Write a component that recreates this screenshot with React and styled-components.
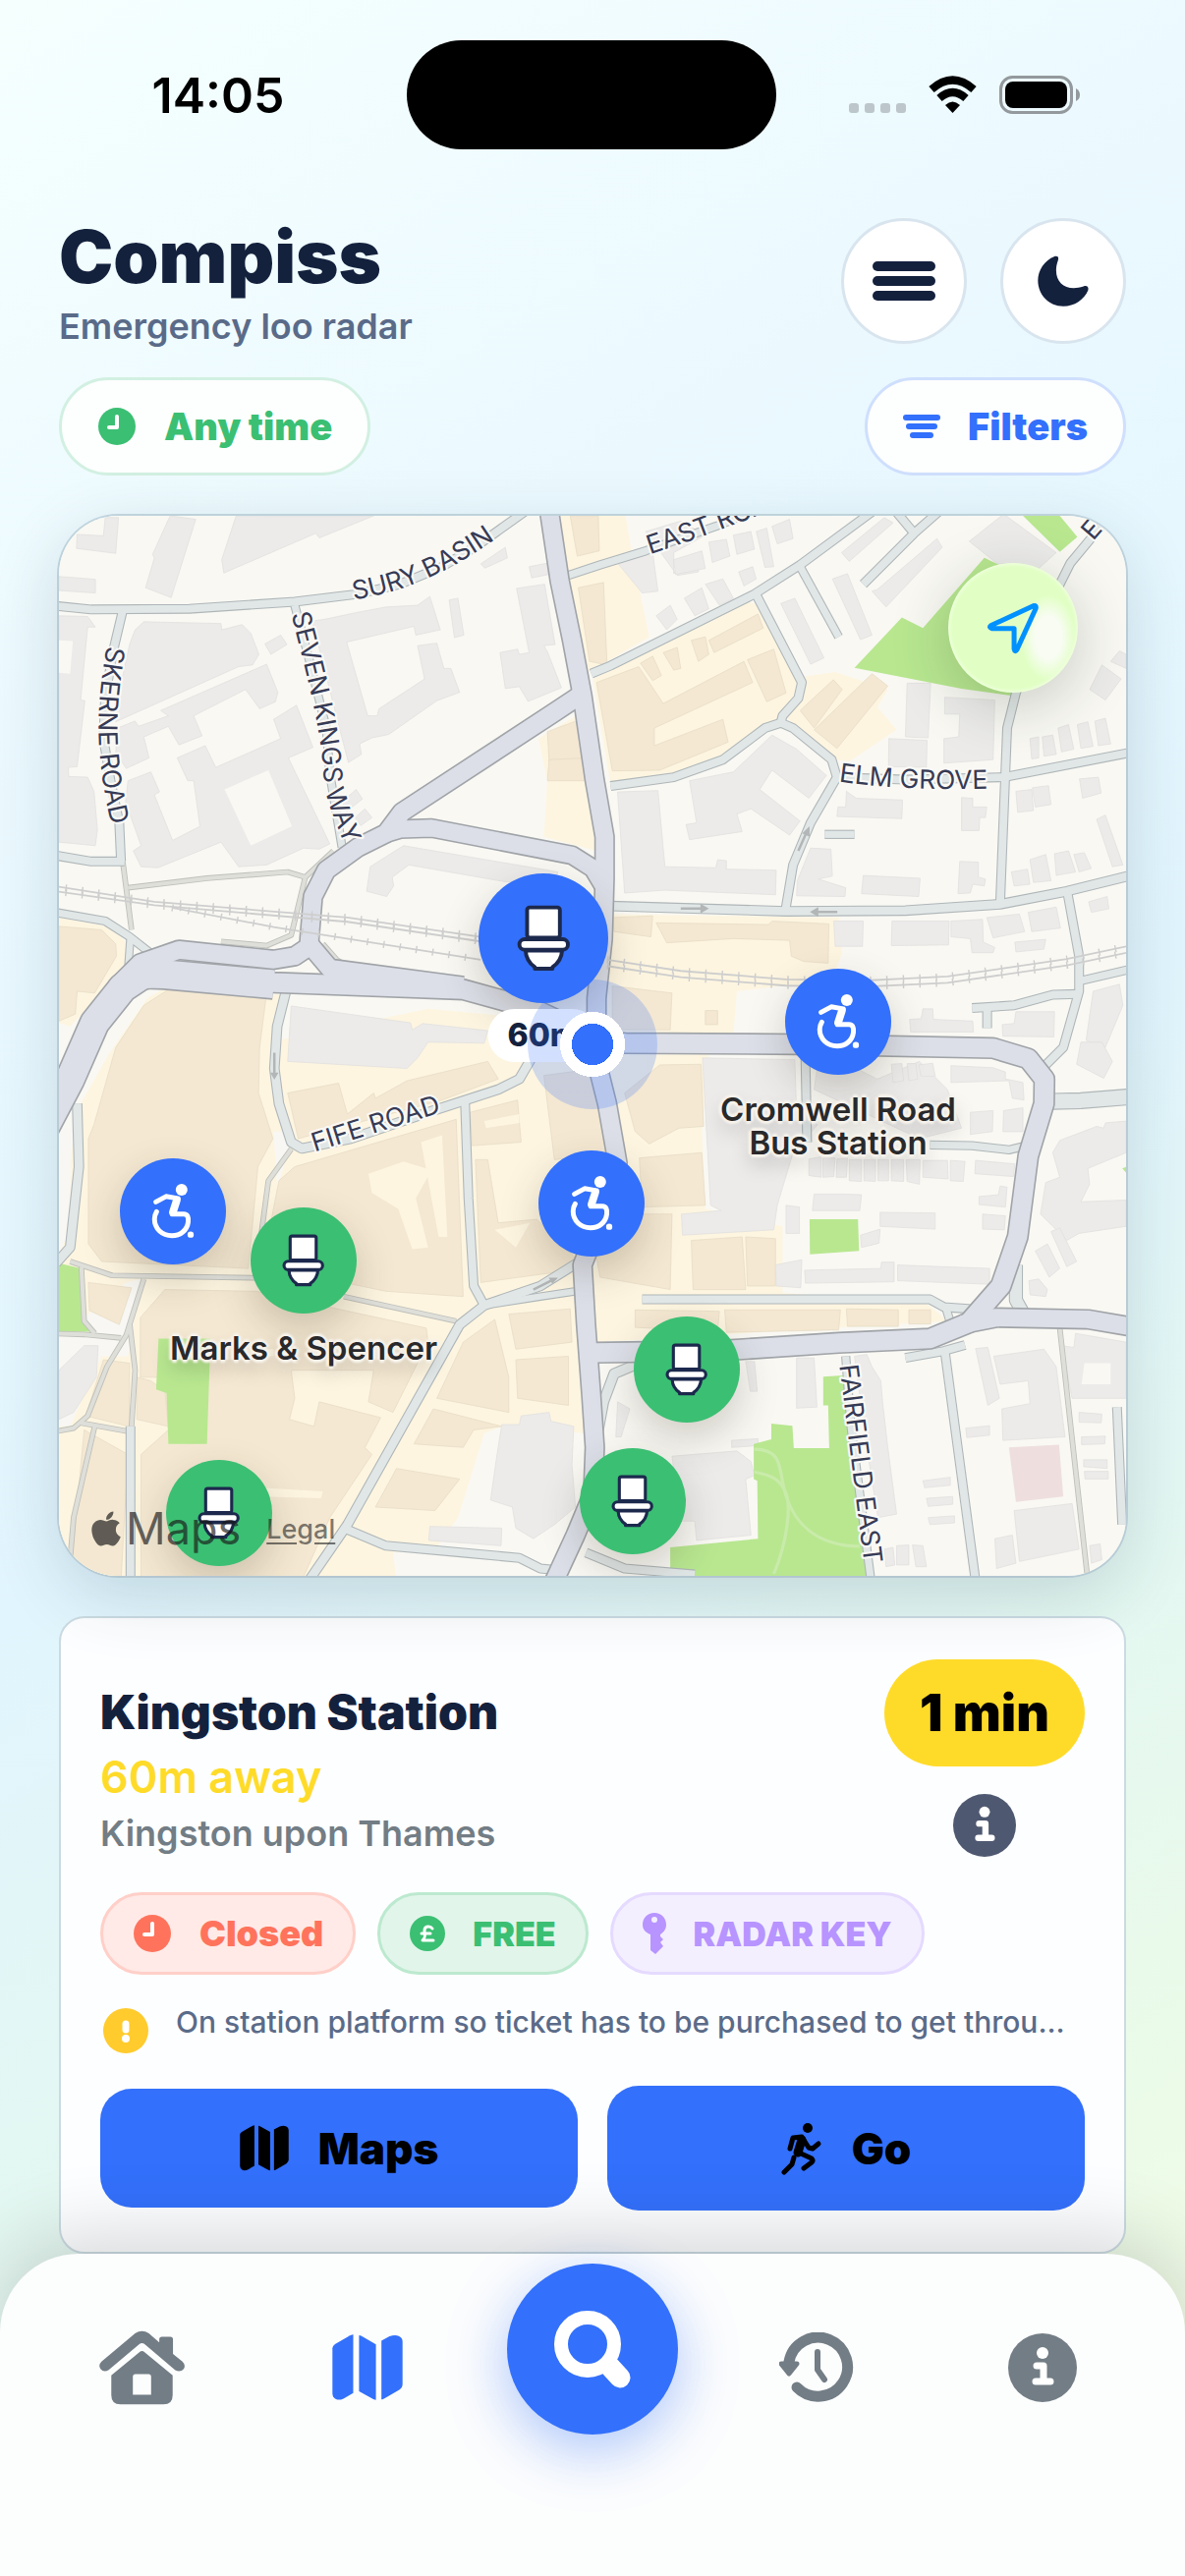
import React from 'react';
import styled, { createGlobalStyle } from 'styled-components';
import { FaApple } from 'react-icons/fa';

const NAVY = '#14213d';
const BLUE = '#3370fb';
const GREEN = '#3bbf73';
const CORAL = '#ff735c';
const LILAC = '#b794ff';
const GREY = '#727d85';

/* ---------- map data (drawn on a 3041 x 3021 grid) ---------- */

const majorRoads = [
    ['1425,30 1455,230 1490,400 1520,560 1555,800 1583,960 1583,1080 1578,1250 1560,1420 1560,1600 1590,1720 1620,1890 1560,2080 1520,2180 1530,2350 1545,2550 1555,2700 1550,2830 1500,2950 1440,3080', 50],
    ['1515,555 1440,605 1005,890 960,950 880,990 790,1055 752,1130 742,1250 740,1290', 50],
    ['960,950 1000,938 1090,935 1490,1012 1550,1050 1580,1100', 48],
    ['190,1390 260,1320 370,1282 640,1310 700,1300 745,1270 800,1335 1180,1385', 50],
    ['-40,1840 60,1650 130,1490 210,1390 270,1350 330,1352 640,1380', 80],
    ['250,1372 330,1350 640,1375 1180,1395 1380,1450 1560,1535 1640,1548 2140,1551 2690,1562 2790,1592 2836,1650 2835,1720 2790,1870 2760,2100 2712,2240 2620,2345 2510,2390 2250,2402 1900,2425 1555,2430', 54],
    ['2600,2350 2700,2330 2960,2335 3090,2357', 50],
];

const minorRoads = [
    ['0,300 120,312 400,310 700,290 880,268 1000,240 1120,190 1220,130 1360,30', 22],
    ['210,315 185,420 160,560 155,680 175,800 200,920 205,1030', 22],
    ['0,1010 120,1030 215,1030', 22],
    ['700,300 740,450 790,650 800,780 835,990', 20],
    ['0,1172 160,1200 230,1245 300,1300', 20],
    ['232,1245 225,1340', 18],
    ['675,1400 650,1500 642,1620 655,1720 690,1830 720,1848 860,1820 1110,1735 1280,1680 1340,1650 1375,1590', 24],
    ['1185,1710 1195,1990 1210,2240 1240,2295', 22],
    ['740,3080 850,2920 1170,2350 1240,2295 1400,2240 1520,2165', 24],
    ['1240,2295 1400,2270 1520,2252', 18],
    ['80,1720 85,1900 60,2130 20,2175', 24],
    ['232,2640 232,3080', 22],
    ['840,2930 960,2980 1180,3000 1340,3015 1400,3045 1450,3050', 22],
    ['1480,215 1570,185 1700,145 1900,75 2040,20', 20],
    ['1545,495 1600,472 2010,268 2140,185 2350,30', 22],
    ['2015,270 2145,520 2135,565 2090,615 2085,635', 22],
    ['1600,815 1780,790 1920,740 2040,650 2085,635 2120,650 2230,740 2245,790 2170,920 2120,1040 2098,1170', 22],
    ['2140,190 2250,390', 20],
    ['2320,240 2465,95 2550,20', 22],
    ['2465,95 2415,35', 22],
    ['2240,790 2440,797 2720,790 3090,718', 22],
    ['3010,60 2910,180 2840,320 2755,550 2730,650 2720,900 2710,1150', 22],
    ['1600,1157 2100,1172 2440,1170 2710,1152 2900,1115 3090,1068', 24],
    ['2902,1120 2935,1300 2935,1400 2890,1560 2830,1620', 22],
    ['2940,1370 3090,1335', 20],
    ['2930,1408 2860,1410 2750,1440 2630,1448', 22],
    ['2673,1448 2673,1505', 22],
    ['2860,1714 2940,1712 3090,1700', 42],
    ['2155,1580 2160,1830', 22],
    ['2510,1838 2630,1840 2735,1852 2785,1840', 20],
    ['1690,2278 2510,2278 2550,2300 2620,2305 2660,2325', 22],
    ['2555,2300 2570,2350', 20],
    ['2755,2180 2755,2280 2780,2325', 34],
    ['2440,2445 2550,2425 2610,2408', 22],
    ['2553,2430 2640,3080', 22],
    ['2270,2440 2285,2640 2342,3080', 20],
    ['1700,2452 1610,2490 1580,2570 1565,2650', 26],
    ['1530,3000 1640,3045 1840,3062', 22],
    ['3043,2585 3058,2920', 22],
    ['2210,953 2295,953', 20],
];

const footPaths = [
    '2880,2360 2960,3080',
    '210,1030 235,1225',
    '225,1105 450,1078 680,1060 730,1075 810,1000',
    '730,1075 690,1240 620,1270 490,1258',
    '780,1265 820,1310 850,1330',
    '60,2170 180,2210 600,2217',
    '270,2220 220,2380 165,2470 110,2610 70,2645 0,2658',
    '0,2375 100,2378 205,2388',
    '92,2185 100,2340 130,2375',
    '230,2350 245,2480 235,2640',
    '130,2640 70,2900 55,3080',
    '90,2630 230,2655',
    '690,1850 625,1940 605,2090',
    '840,2270 1160,2340',
];

const railways = [
    '0,1098 300,1145 850,1190 1230,1245',
    '0,1112 300,1155 850,1202 1230,1258',
    '350,1162 640,1217 1230,1310',
    '1590,1310 1800,1342 2100,1366 2350,1368 2560,1358 2900,1308 3090,1268',
    '1590,1328 1800,1360 2100,1384 2350,1386 2560,1376 2900,1326 3090,1286',
];

const commercial = [
    '28,1190 170,1215 220,1260 215,1340 60,1500 28,1490',
    '170,1580 280,1420 340,1385 660,1410 650,1540 1080,1450 1400,1480 1530,1560 1620,1880 1520,2180 1500,2300 1530,2660 1290,2640 1240,2660 1165,2900 1100,2990 980,3000 990,3080 0,3080 0,2200 90,1720',
    '1455,30 1640,30 1660,150 1710,390 1540,490 1500,430',
    '1550,510 1980,290 2040,300 2140,520 2080,640 1900,760 1740,790 1600,810',
    '2140,505 2240,490 2390,540 2360,590 2415,655 2280,745 2240,740 2100,620',
    '1600,1180 2250,1190 2260,1290 2230,1370 1960,1400 1950,1520 1590,1520',
    '1395,680 1510,610 1555,830 1560,1000 1410,960 1420,800',
    '1600,1580 1880,1580 1860,1800 1870,2020 2090,2070 2090,2260 2500,2290 2560,2340 1560,2400 1545,2200 1620,2100',
];

const openLand = [
    '28,1790 62,1790 60,2080 28,2150',
    '28,2390 220,2230 260,2220 225,2440 150,2440 60,2640 28,2640',
    '640,1800 700,1800 650,1960',
];

const shops = [
    '28,1215 150,1225 190,1265 192,1300 130,1405 80,1400 75,1465 28,1485',
    '190,1560 270,1440 340,1395 618,1420 600,1560 597,1690 638,1820 595,1900 568,2190 150,2170 112,2120 112,1820 128,1780',
    '680,1690 825,1662 850,1750 925,1690 930,1705 1020,1655 1250,1600 1280,1650 1120,1710 710,1820',
    '655,1940 700,1900 1160,1765 1180,2270 960,2255 840,2230 620,2120',
    '260,2330 330,2250 590,2255 1075,2360 1080,2400 980,2600 910,2570 925,2480 690,2480 700,2560 685,2620 755,2640 770,2570 945,2615 900,2700 920,2720 800,2900 720,3080 262,3080 262,2720 340,2650 330,2500 260,2500',
    '1200,1745 1335,1710 1345,1830 1205,1840',
    '1215,1880 1250,1880 1280,2060 1390,2050 1500,2160 1450,2200 1230,2230',
    '1410,1640 1560,1620 1600,1860 1440,1880',
    '1310,2320 1485,2305 1490,2400 1330,2420',
    '1270,2335 1310,2500 1310,2600 1105,2560 1180,2400',
    '1095,2590 1290,2640 1210,2650 1180,2700 1040,2690',
    '990,2760 1170,2790 1100,2880 930,2870',
    '1330,2450 1480,2440 1480,2580 1335,2560',
    '112,2230 235,2245 200,2350 115,2310',
    '155,2450 230,2460 228,2640 105,2610',
    '250,2500 290,2510 330,2540 340,2640 250,2620',
    '100,2650 225,2720 205,3080 60,3080',
    '1485,45 1565,45 1568,145 1505,160',
    '1508,250 1580,235 1590,470 1540,460',
    '1560,520 1680,475 1750,580 1980,460 2005,520 1725,650 1725,700 1920,625 1935,690 1740,770 1605,772',
    '1880,400 2020,325 2035,365 1895,435',
    '1990,455 2065,425 2100,550 2045,575',
    '1685,465 1720,445 1745,500 1720,515',
    '1750,435 1790,420 1800,480 1780,485',
    '1830,400 1870,390 1880,440 1850,460',
    '2140,600 2235,512 2260,540 2180,650',
    '2180,655 2345,495 2390,530 2245,708',
    '1420,660 1515,625 1530,740 1425,745',
    '1425,740 1530,735 1535,800 1420,800',
    '1730,1205 2050,1210 2060,1200 2222,1208 2220,1320 2150,1315 2115,1300 2110,1255 1950,1250 1760,1262',
    '1605,1190 1720,1185 1715,1245 1610,1230',
    '1605,1385 1775,1405 1770,1510 1605,1510',
    '1870,1455 1905,1455 1905,1495 1870,1495',
    '1740,1610 1858,1608 1865,1785 1795,1790 1710,1835 1670,1800 1640,1690',
    '1682,1875 1860,1860 1870,2010 1690,2015',
    '1560,2160 1690,2035 1775,2035 1770,2250 1570,2215',
    '1830,2110 1975,2100 1985,2250 1835,2250',
    '1985,2100 2070,2105 2070,2240 1990,2240',
    '1670,2308 1910,2312 1905,2370 1670,2358',
    '1925,2308 2255,2308 2250,2365 1930,2372',
    '2272,2305 2420,2308 2420,2355 2275,2355',
    '2450,2308 2512,2308 2512,2348 2450,2348',
];

const shopYards = [
    '910,1920 1010,1885 1090,1910 1045,1990 1080,2130 1035,2135 995,2020 920,1975',
    '1060,1830 1120,1810 1135,2100 1110,2100',
    '560,2420 640,2420 640,2440 560,2440',
    '600,2815 780,2825 775,2845 600,2840',
    '1270,2080 1370,2060 1330,2130',
    '1240,1770 1340,1750 1340,1775 1245,1790',
];

const buildings = [
    '80,98 155,102 160,50 198,50 190,152 78,138',
    '345,45 418,55 348,278 275,250 300,165 295,155',
    '533,45 925,45 770,108 760,95 498,208 492,170',
    '28,218 132,226 132,265 28,258',
    '28,330 110,332 132,362 110,362 90,570 102,572 80,760 55,762 56,788 110,790 128,830 138,940 132,985 28,975',
    '245,370 270,347 490,352 492,370 550,355 575,380 598,440 580,470 540,475 190,632 208,510 230,410',
    '318,600 620,468 652,548 645,575 600,595 560,540 412,615 436,672 370,698 340,645 270,675 285,735 220,765 190,720 195,650 245,630 255,645 340,615',
    '365,735 445,700 475,762 660,680 640,625 705,585 752,705 682,735 800,980 770,995 725,992 620,1040 540,1045 490,975 310,1048 262,1045 240,1000 262,985 218,860 225,800 290,775 315,832 300,840 352,970 430,930 412,800 395,800',
    '615,410 660,385 678,412 632,440',
    '750,345 785,340 880,320 960,305 1050,300 1085,275 1115,370 1045,385 1040,360 848,405 908,615 935,615 940,595 1070,510 1050,415 1105,408 1125,480 1145,480 1170,548 1105,572 968,668 920,678 885,695 890,725 853,748 830,660',
    '1140,285 1165,280 1182,385 1155,392',
    '1230,182 1300,135 1306,165 1242,194',
    '1368,190 1420,180 1425,212 1375,222',
    '1332,252 1412,240 1442,412 1410,415 1420,432 1460,535 1365,574 1340,532 1300,537 1285,435 1335,425 1340,440 1368,435',
    '835,860 875,825 893,852 848,888',
    '872,905 900,880 920,905 888,928',
    '915,1045 1010,985 1450,1060 1440,1090 1300,1088 1025,1040 978,1075 982,1100 962,1130 905,1115',
    '690,1442 1030,1490 1035,1510 1065,1492 1250,1512 1240,1548 1080,1545 1050,1590 1020,1620 680,1600',
    '1620,180 1720,150 1735,260 1690,265',
    '1700,90 1800,60 1870,100 1780,150 1780,210 1850,180 1850,205 1790,215',
    '1780,170 1860,145 1870,195 1785,212',
    '1880,120 1930,112 1940,160 1890,178',
    '1950,100 2000,90 2010,140 1960,155',
    '2015,90 2045,80 2065,190 2040,192',
    '2060,75 2110,55 2120,110 2075,125',
    '1810,280 1860,250 1880,310 1840,330',
    '1870,240 1920,225 1950,280 1910,300',
    '1730,330 1770,300 1790,340 1760,370',
    '1965,205 2005,190 2015,225 1980,245',
    '2085,295 2125,280 2208,450 2170,468',
    '2232,225 2275,210 2345,385 2312,398',
    '2258,150 2380,50 2405,65 2280,175',
    '2360,255 2530,110 2545,135 2385,305 2345,260',
    '2622,118 2720,40 2870,150 2820,195 2700,180',
    '2445,522 2512,522 2505,678 2440,675',
    '2393,680 2502,685 2500,762 2392,760',
    '2552,562 2695,570 2690,740 2550,750 2550,680 2592,675 2595,610 2552,610',
    '1620,832 1735,828 1755,1045 1900,1048 1905,1025 1930,1028 1930,1052 2072,1055 2070,1125 1755,1112 1640,1120',
    '1825,800 1950,775 2060,670 2130,710 2215,785 2165,850 2060,770 2025,825 2140,915 2110,955 2000,880 1960,895 1975,945 1825,968 1815,925 1845,920',
    '2272,830 2300,850 2432,855 2430,908 2245,902 2248,875 2270,875',
    '2600,848 2632,850 2632,875 2672,875 2668,905 2652,905 2650,942 2600,942',
    '2755,830 2800,825 2805,885 2760,890',
    '2802,820 2848,814 2855,868 2810,875',
    '2936,795 2990,790 2998,835 2945,850',
    '2170,992 2228,995 2232,1072 2192,1080 2270,1105 2268,1130 2130,1128 2132,1085',
    '2320,1070 2482,1078 2478,1130 2315,1122',
    '2595,1030 2648,1032 2648,1075 2668,1080 2665,1100 2632,1095 2625,1120 2590,1122',
    '2742,1060 2788,1052 2795,1095 2750,1100',
    '2795,1025 2840,1010 2855,1085 2805,1090',
    '2865,1008 2905,1000 2925,1060 2870,1070',
    '2920,1010 2950,1005 2970,1050 2935,1060',
    '2985,910 3010,898 3060,1040 3030,1045',
    '2795,680 2820,675 2820,735 2800,738',
    '2830,675 2860,670 2870,725 2835,730',
    '2875,650 2905,640 2920,710 2885,718',
    '2930,640 2960,632 2975,702 2940,708',
    '2980,630 3010,622 3025,695 2990,700',
    '2965,540 3000,470 3055,510 3010,570',
    '3025,460 3050,430 3069,440 3069,480',
    '2236,1200 2320,1200 2318,1272 2240,1272',
    '2402,1200 2565,1200 2563,1268 2400,1270',
    '2570,1200 2660,1195 2662,1260 2695,1275 2690,1290 2630,1290 2625,1250 2570,1245',
    '2672,1190 2765,1180 2780,1230 2690,1248',
    '2790,1175 2870,1160 2882,1220 2800,1230',
    '2752,1260 2840,1252 2835,1280 2755,1288',
    '2962,1145 3015,1130 3020,1165 2970,1175',
    '2452,1480 2485,1478 2490,1450 2518,1450 2520,1480 2632,1485 2634,1516 2455,1516',
    '2716,1495 2750,1492 2755,1458 2865,1458 2863,1530 2718,1528',
    '2975,1400 3050,1380 3060,1440 3010,1560 2955,1540',
    '2940,1545 3000,1545 3030,1600 3005,1648 2928,1608',
    '1862,1590 2125,1595 2130,1750 2190,1780 2120,1860 2075,2010 2065,2080 1805,2095 1802,2035 1915,2025 1885,2010',
    '2190,1610 2280,1610 2360,1650 2480,1600 2560,1680 2600,1790 2480,1820 2180,1680',
    '2400,1608 2430,1606 2435,1655 2405,1660',
    '2445,1606 2470,1606 2475,1650 2450,1655',
    '2478,1610 2518,1605 2525,1642 2485,1642',
    '2570,1612 2690,1618 2725,1630 2725,1650 2775,1660 2778,1710 2745,1705 2735,1655 2570,1660',
    '2625,1745 2690,1740 2688,1800 2625,1808',
    '2720,1740 2775,1732 2775,1800 2718,1800',
    '2165,1878 2200,1872 2200,1930 2165,1925',
    '2205,1875 2240,1875 2236,1928 2205,1930',
    '2245,1878 2275,1875 2272,1930 2243,1930',
    '2280,1880 2315,1880 2315,1942 2280,1940',
    '2322,1880 2355,1880 2355,1942 2322,1940',
    '2362,1880 2392,1880 2392,1940 2362,1940',
    '2400,1880 2435,1880 2435,1942 2400,1940',
    '2442,1880 2482,1880 2480,1950 2445,1942',
    '2490,1882 2560,1882 2562,1935 2490,1930',
    '2568,1882 2610,1885 2605,1942 2568,1940',
    '2640,1882 2752,1892 2748,1928 2638,1920',
    '2180,1978 2265,1978 2315,1980 2310,2025 2175,2025',
    '2368,2030 2525,2032 2525,2078 2368,2070',
    '2312,2095 2368,2078 2365,2118 2315,2130',
    '2650,1985 2705,1980 2710,1955 2730,1958 2725,2015 2650,2008',
    '2660,2035 2725,2040 2722,2080 2660,2078',
    '2100,2010 2138,2015 2138,2090 2100,2090',
    '2070,2180 2145,2165 2142,2245 2072,2240',
    '2153,2195 2370,2190 2372,2172 2408,2172 2408,2228 2155,2232',
    '2418,2180 2680,2190 2680,2235 2418,2225',
    '2880,1825 2985,1785 3005,1790 3010,1775 3069,1770 3069,1860 2960,1905 2965,1950 2940,2000 3069,1995 3069,2070 2935,2090 2900,2110 2825,2035 2840,1945 2880,1930 2860,1860',
    '2810,2140 2845,2120 2880,2190 2850,2215',
    '2855,2085 2880,2075 2928,2170 2900,2185',
    '2792,2225 2820,2220 2845,2250 2840,2270 2795,2265',
    '2640,2418 2675,2415 2708,2560 2675,2580',
    '2692,2440 2835,2420 2870,2470 2895,2670 2718,2680 2715,2590 2795,2575 2790,2510 2710,2520',
    '2885,2410 2920,2415 2925,2375 3069,2400 3069,2560 2915,2560',
    '2612,2645 2680,2638 2680,2665 2615,2672',
    '2750,2880 2915,2860 2935,2990 2765,3025',
    '2695,2960 2745,2950 2755,3030 2700,3045',
    '2130,2445 2180,2445 2188,2585 2130,2588',
    '1985,2455 2010,2455 2018,2540 1998,2540',
    '2295,2440 2330,2435 2345,2470 2370,2510 2375,2570 2390,2700 2415,2890 2362,2900 2330,2700',
    '1620,2570 1655,2590 1630,2670 1615,2670',
    '1945,2680 2020,2675 2020,2695 1945,2700',
    '1775,2725 1960,2710 2000,2740 2010,2780 1985,2790 2000,2950 1845,2965 1840,2910 1800,2910',
    '1290,2635 1340,2635 1345,2610 1425,2600 1430,2625 1495,2640 1490,2750 1500,2870 1440,2920 1380,2960 1330,2930 1320,2870 1258,2850 1275,2730',
    '1085,2925 1290,2930 1288,2980 1082,2965',
    '28,2480 100,2410 140,2410 135,2500 70,2600 28,2620',
    '2935,2600 3000,2605 2998,2630 2935,2628',
    '2942,2670 3010,2668 3008,2690 2942,2692',
    '2948,2735 3015,2735 3015,2760 2948,2755',
    '2950,2768 3018,2768 3018,2790 2952,2790',
    '2490,2795 2568,2785 2568,2808 2495,2815',
    '2500,2845 2575,2840 2575,2862 2505,2868',
    '2505,2900 2580,2895 2580,2915 2510,2920',
    '2380,2990 2405,2985 2410,3035 2385,3040',
    '2415,2980 2450,2978 2450,3035 2415,3035',
    '2460,2978 2490,2980 2500,3040 2470,3040',
    '2965,2980 2995,2975 3000,3020 2970,3030',
];

const parks = [
    '312,2390 460,2390 450,2690 340,2690 335,2545 305,2535',
    '28,2175 90,2190 100,2340 130,2370 28,2370',
    '2295,478 2430,335 2490,365 2665,165 2740,200 2760,560 2600,538',
    '2775,45 2880,45 2930,105 2880,148',
    '2167,2050 2305,2050 2308,2140 2168,2150',
    '2206,2498 2262,2495 2340,3080 1770,3080 1770,2985 2020,2960 2018,2795 2008,2790 2008,2690 2058,2677 2058,2632 2118,2638 2122,2702 2223,2702 2220,2580 2206,2580',
    '3058,1905 3070,1900 3070,1918',
];

const streetNames = [
    { id: 'sury', text: 'SURY BASIN', d: 'M868 284 C1000 264 1130 217 1310 85' },
    { id: 'skerne', text: 'SKERNE ROAD', d: 'M165 415 C130 610 130 740 190 980' },
    { id: 'seven', text: 'SEVEN KINGS WAY', d: 'M690 325 C740 520 775 660 782 780 C784 850 810 900 865 1040' },
    { id: 'east', text: 'EAST ROAD', d: 'M1712 155 C1850 110 1960 67 2110 10' },
    { id: 'elm', text: 'ELM GROVE', d: 'M2250 802 Q2450 832 2740 820' },
    { id: 'elton', text: 'ELTON ROAD', d: 'M2975 118 L3130 -60' },
    { id: 'fife', text: 'FIFE ROAD', d: 'M757 1858 L1190 1722' },
    { id: 'fairfield', text: 'FAIRFIELD EAST', d: 'M2252 2466 L2328 3075' },
];

/* x and y are measured on the 1086 x 1079 map */
const pins = [
    { x: 793, y: 515, kind: 'access', name: 'Cromwell Road Bus Station', lines: ['Cromwell Road', 'Bus Station'] },
    { x: 116, y: 708, kind: 'access', name: 'Accessible toilet' },
    { x: 249, y: 758, kind: 'toilet', name: 'Marks & Spencer', lines: ['Marks & Spencer'] },
    { x: 542, y: 700, kind: 'access', name: 'Accessible toilet' },
    { x: 639, y: 869, kind: 'toilet', name: 'Public toilet' },
    { x: 584, y: 1003, kind: 'toilet', name: 'Public toilet' },
    { x: 163, y: 1015, kind: 'toilet', name: 'Public toilet' },
];

/* ---------- icons ---------- */

const ToiletIcon = ({ size }) => (
    <svg height={size} viewBox="199 190 168 208" fill="#fff" stroke="#1c294d" strokeWidth="12" strokeLinejoin="round">
        <path d="M226 332 H340 C338 362 322 376 310 384 V389 H255 V384 C243 376 228 362 226 332Z" />
        <rect x="231" y="198" width="102" height="94" rx="8" />
        <rect x="207" y="297" width="151" height="33" rx="16" />
    </svg>
);

const AccessIcon = () => (
    <svg height="58" viewBox="288 408 132 164" fill="none" stroke="#fff" strokeWidth="14" strokeLinecap="round" strokeLinejoin="round">
        <circle cx="378" cy="428" r="17" fill="#fff" stroke="none" />
        <circle cx="404" cy="557" r="9" fill="#fff" stroke="none" />
        <path d="M304 463 L333 447 L368 453 L351 498 H384 C396 498 398 508 397 520 C394 545 374 560 350 560 C322 560 300 540 300 512 C300 502 303 496 306 491" />
        <path d="M364 458 L353 492" strokeWidth="22" />
    </svg>
);

const ClockIcon = () => (
    <svg width="40" height="40" viewBox="0 0 40 40">
        <circle cx="20" cy="20" r="19" fill="currentColor" />
        <path d="M20 10 V21 H12" fill="none" stroke="#fff" strokeWidth="4" strokeLinecap="round" strokeLinejoin="round" />
    </svg>
);

const PoundIcon = () => (
    <svg width="36" height="36" viewBox="0 0 36 36">
        <circle cx="18" cy="18" r="18" fill="currentColor" />
        <path d="M23 13 C21 10 15 10 15 15 C15 20 17 21 13 25 H24 M12 18 H21" fill="none" stroke="#fff" strokeWidth="3" strokeLinecap="round" strokeLinejoin="round" />
    </svg>
);

const KeyIcon = () => (
    <svg width="24" height="42" viewBox="0 0 24 42">
        <path fill="currentColor" fillRule="evenodd" d="M12 0 C19 0 24 5 24 12 C24 17 21 20 18 22 V24 L21 27 L18 30 L21 34 L18 37 L13 42 L8 38 V22 C3 20 0 17 0 12 C0 5 5 0 12 0Z M12 4 A3 3 0 1 0 12 10 A3 3 0 1 0 12 4Z" />
    </svg>
);

const FilterIcon = () => (
    <svg width="38" height="26" viewBox="0 0 38 26" fill="currentColor">
        <rect width="38" height="6" rx="3" y="1" />
        <rect x="3" y="10" width="32" height="6" rx="3" />
        <rect x="7" y="19" width="24" height="6" rx="3" />
    </svg>
);

const MenuIcon = () => (
    <svg width="64" height="40" viewBox="0 0 64 40" fill="currentColor">
        <rect width="64" height="10" rx="5" />
        <rect y="15" width="64" height="10" rx="5" />
        <rect y="30" width="64" height="10" rx="5" />
    </svg>
);

const MoonIcon = () => (
    <svg width="52" height="52" viewBox="620 149 157 157" fill="currentColor">
        <path d="M672 152 C640 165 621 195 621 226 C621 270 655 305 699 305 C733 305 763 285 775 256 C778 245 771 240 761 244 C713 260 677 238 677 195 C677 182 679 175 683 163 C686 153 680 149 672 152Z" />
    </svg>
);

const InfoIcon = ({ size }) => (
    <svg width={size} height={size} viewBox="-35 -35 70 70">
        <circle r="35" fill="currentColor" />
        <circle cy="-15" r="6" fill="#fff" />
        <path d="M-6 -2 H1 V14 M-7 14 H8" fill="none" stroke="#fff" strokeWidth="7" strokeLinecap="round" strokeLinejoin="round" />
    </svg>
);

const AlertIcon = () => (
    <svg width="46" height="46" viewBox="0 0 46 46">
        <circle cx="23" cy="23" r="23" fill="#ffcb2d" />
        <path d="M23 16 V22" stroke="#fff" strokeWidth="7" strokeLinecap="round" />
        <circle cx="23" cy="31" r="4" fill="#fff" />
    </svg>
);

const MapIcon = ({ size }) => (
    <svg width={size} viewBox="833 257 218 203" fill="currentColor">
        <path d="M834 300 Q834 292 842 287 L888 261 Q897 257 898 258 V438 L868 455 Q855 461 845 457 Q834 452 834 439Z" />
        <path d="M916 260 Q920 260 925 263 L968 288 V459 Q964 459 960 457 L916 433Z" />
        <path d="M985 277 L1010 263 Q1027 257 1038 262 Q1050 267 1050 279 V411 Q1050 422 1040 428 L993 455 Q987 458 985 458Z" />
    </svg>
);

const RunIcon = () => (
    <svg width="42" height="54" viewBox="756 129 42 54" fill="none" stroke="currentColor" strokeWidth="5" strokeLinecap="round" strokeLinejoin="round">
        <circle cx="783" cy="135" r="5" fill="currentColor" stroke="none" />
        <path d="M765 156 L768 145 L777 144 L784 155 L788 156 L794 151" />
        <path d="M777 147 L773 160" strokeWidth="9" />
        <path d="M774 160 L787 166 Q789 168 787 170 L779 176" />
        <path d="M769 165 L767 172 L759 180" />
    </svg>
);

const HomeIcon = () => (
    <svg width="87" height="76" viewBox="122 245 262 227" fill="currentColor">
        <path d="M232 253 Q253 239 274 253 L306 281 V272 Q306 264 314 264 H340 Q348 264 348 272 V316 L377 340 Q388 351 381 362 Q371 374 355 366 L262 287 Q253 279 244 287 L151 365 Q136 374 126 362 Q118 351 129 340Z" />
        <path fillRule="evenodd" d="M159 382 L245 311 Q253 304 261 311 L347 382 V443 Q347 471 319 471 H187 Q159 471 159 443Z M233 378 Q225 378 225 386 V441 H281 V386 Q281 378 273 378Z" />
    </svg>
);

const SearchIcon = () => (
    <svg width="80" height="80" viewBox="0 0 80 80" fill="none" stroke="#fff" strokeLinecap="round">
        <circle cx="35" cy="35" r="27" strokeWidth="14" />
        <path d="M57 57 L68 69" strokeWidth="21" />
    </svg>
);

const HistoryIcon = () => (
    <svg width="78" height="72" viewBox="2 0 78 72" fill="none" stroke="currentColor" strokeLinecap="round" strokeLinejoin="round">
        <path d="M12 30 A30 30 0 1 1 20 56" strokeWidth="11" />
        <path d="M4 32 H20 L12 42Z" fill="currentColor" strokeWidth="5" />
        <path d="M41 20 V38 L48 48" strokeWidth="6" />
    </svg>
);

const StatusIcons = () => (
    <svg width="236" height="40" viewBox="865 78 236 40">
        <g fill="#bcc6cb">
            <rect x="865" y="106" width="10" height="10" rx="3" />
            <rect x="881" y="106" width="10" height="10" rx="3" />
            <rect x="897" y="106" width="10" height="10" rx="3" />
            <rect x="913" y="106" width="10" height="10" rx="3" />
        </g>
        <g fill="none" stroke="#000" strokeWidth="8">
            <path d="M949 92 Q970.500 73 992 92" />
            <path d="M957 101 Q970.500 89 984 101" />
        </g>
        <path d="M970.500 116 L963 108 Q970.500 101 978 108Z" />
        <rect x="1019.500" y="79.500" width="72" height="36" rx="12" fill="none" stroke="#93999c" strokeWidth="3" />
        <rect x="1024" y="84" width="63" height="27" rx="8" />
        <path d="M1096 91 Q1100 93 1100 97.500 Q1100 102 1096 104Z" fill="#93999c" />
    </svg>
);

const LocateIcon = () => (
    <svg width="54" height="54" viewBox="1126 293 150 150" fill="none" stroke="#0091ff" strokeWidth="14" strokeLinejoin="round">
        <path d="M1138 362 L1258 306 Q1268 303 1265 314 L1212 430 Q1206 438 1204 428 V370 H1142 Q1132 367 1138 362Z" />
    </svg>
);

const Polygons = ({ list, ...rest }) => (
    <g {...rest}>
        {list.map((points) => <polygon key={points} points={points} />)}
    </g>
);

const Roads = ({ list, extra, ...rest }) => (
    <g fill="none" strokeLinejoin="round" {...rest}>
        {list.map(([points, width]) => (
            <polyline key={points} points={points} strokeWidth={width + extra} />
        ))}
    </g>
);

const StreetMap = () => (
    <MapDrawing viewBox="28 45 3041 3021" preserveAspectRatio="xMidYMid slice">
        <rect x="0" y="0" width="3100" height="3100" fill="#f9f8f3" />
        <Polygons list={commercial} fill="#fdf5e0" />
        <Polygons list={openLand} fill="#f8f7f3" />
        <Polygons list={shops} fill="#f4e8d2" stroke="#e6dac4" strokeWidth="2" />
        <Polygons list={shopYards} fill="#fdf5e0" />
        <Polygons list={buildings} fill="#ecebea" stroke="#e0dfdd" strokeWidth="2" />
        <polygon points="500,825 625,770 692,930 575,985" fill="#f9f8f3" />
        <polygon points="28,400 68,402 60,495 28,492" fill="#f9f8f3" />
        <polygon points="2950,2460 3025,2460 3025,2520 2942,2520" fill="#f9f8f3" />
        <Polygons list={parks} fill="#b8e790" />
        <polygon points="2735,2700 2878,2692 2890,2840 2755,2855" fill="#eedfde" />
        <path d="M2010 2705 C2090 2705 2080 2760 2095 2820 C2120 2920 2190 2980 2310 2982 M2010 2770 C2060 2780 2080 2790 2095 2820 C2120 2860 2100 2980 2065 3060" fill="none" stroke="#c9ebaa" strokeWidth="9" />
        <g fill="none" strokeLinejoin="round">
            {footPaths.map((p) => <polyline key={p} points={p} stroke="#bfc0ba" strokeWidth="16" />)}
            {footPaths.map((p) => <polyline key={p} points={p} stroke="#dfdfda" strokeWidth="11" />)}
        </g>
        <Roads list={minorRoads} extra={6} stroke="#afb6b8" />
        <Roads list={minorRoads} extra={0} stroke="#e1e7e7" />
        <Roads list={majorRoads} extra={9} stroke="#a0a4a8" />
        <Roads list={majorRoads} extra={0} stroke="#dcdfe8" />
        <g fill="none" stroke="#cecece">
            {railways.map((p) => <polyline key={p} points={p} strokeWidth="5" />)}
            {railways.map((p) => <polyline key={p} points={p} strokeWidth="20" strokeDasharray="4 43" />)}
        </g>
        <g fill="none" stroke="#b3b6b6" strokeWidth="7">
            <path d="M1800 1164 H1860 M2246 1174 H2190 M2135 1000 L2158 948 M642 1575 V1640 M1380 2250 L1430 2225" />
            <path d="M1856 1150 L1880 1164 L1856 1178Z M2192 1160 L2168 1174 L2192 1188Z M2146 950 L2167 930 L2167 960Z M630 1632 H654 L642 1652Z M1424 2216 L1450 2216 L1434 2234Z" fill="#b3b6b6" stroke="none" />
        </g>
        <g>
            {streetNames.map((s) => (
                <React.Fragment key={s.id}>
                    <path id={s.id} d={s.d} fill="none" />
                    <StreetName><textPath href={`#${s.id}`}>{s.text}</textPath></StreetName>
                </React.Fragment>
            ))}
        </g>
    </MapDrawing>
);

/* ---------- page ---------- */

export default function App() {
    return (
        <>
            <GlobalStyle />
            <Screen>
                <StatusBar>
                    <Time>14:05</Time>
                    <Island />
                    <StatusIcons />
                </StatusBar>

                <Content>
                    <Header>
                        <div>
                            <Title>Compiss</Title>
                            <Tagline>Emergency loo radar</Tagline>
                        </div>
                        <HeaderActions>
                            <RoundButton aria-label="Menu"><MenuIcon /></RoundButton>
                            <RoundButton aria-label="Dark mode"><MoonIcon /></RoundButton>
                        </HeaderActions>
                    </Header>

                    <FilterRow>
                        <FilterButton $color={GREEN} $line="#d2f0e2"><ClockIcon />Any time</FilterButton>
                        <FilterButton $color={BLUE} $line="#cfdffd"><FilterIcon />Filters</FilterButton>
                    </FilterRow>

                    <MapCard>
                        <StreetMap />
                        {pins.map((pin) => (
                            <Pin key={`${pin.x}-${pin.y}`} $x={pin.x} $y={pin.y} $kind={pin.kind} aria-label={pin.name}>
                                {pin.kind === 'access' ? <AccessIcon /> : <ToiletIcon size={54} />}
                                {pin.lines && (
                                    <PinLabel>
                                        {pin.lines.map((line) => <span key={line}>{line}</span>)}
                                    </PinLabel>
                                )}
                            </Pin>
                        ))}
                        <Pin $x={493} $y={430} $kind="access" $large aria-label="Kingston Station">
                            <ToiletIcon size={68} />
                            <DistanceTag>60m</DistanceTag>
                        </Pin>
                        <Here $x={543} $y={538} />
                        <LocateButton aria-label="Centre on me"><LocateIcon /></LocateButton>
                        <Attribution>
                            <FaApple size={40} />
                            <MapsWord>Maps</MapsWord>
                            <LegalLink href="#legal">Legal</LegalLink>
                        </Attribution>
                    </MapCard>

                    <PlaceCard>
                        <PlaceTop>
                            <PlaceText>
                                <PlaceName>Kingston Station</PlaceName>
                                <Distance>60m away</Distance>
                                <Town>Kingston upon Thames</Town>
                            </PlaceText>
                            <PlaceSide>
                                <Minutes>1 min</Minutes>
                                <PlainButton aria-label="Details"><InfoIcon size={64} /></PlainButton>
                            </PlaceSide>
                        </PlaceTop>
                        <Tags>
                            <Tag $color={CORAL} $fill="#ffeae7" $line="#ffcfc8" $size={36}><ClockIcon />Closed</Tag>
                            <Tag $color={GREEN} $fill="#e2f5ea" $line="#bce9cf" $size={34}><PoundIcon />FREE</Tag>
                            <Tag $color={LILAC} $fill="#f4efff" $line="#e5daff" $size={34}><KeyIcon />RADAR KEY</Tag>
                        </Tags>
                        <Note>
                            <AlertIcon />
                            <NoteText>On station platform so ticket has to be purchased to get throu...</NoteText>
                        </Note>
                        <Actions>
                            <ActionButton $height={121}><MapIcon size={50} />Maps</ActionButton>
                            <ActionButton $height={127}><RunIcon />Go</ActionButton>
                        </Actions>
                    </PlaceCard>
                </Content>

                <TabBar>
                    <Tab aria-label="Home"><HomeIcon /></Tab>
                    <Tab aria-label="Map" $active><MapIcon size={72} /></Tab>
                    <SearchTab aria-label="Search"><SearchIcon /></SearchTab>
                    <Tab aria-label="History"><HistoryIcon /></Tab>
                    <Tab aria-label="About"><InfoIcon size={70} /></Tab>
                </TabBar>
            </Screen>
        </>
    )
}

const GlobalStyle = createGlobalStyle`
* { box-sizing: border-box; }
body {
    margin: 0;
    font-family: Inter, "Liberation Sans", sans-serif;
    color: ${NAVY};
}
button {
    font-family: inherit;
    border: 0;
    padding: 0;
    background: none;
    cursor: pointer;
}
svg { flex: none; }
`

const Screen = styled.div`
display: flex;
flex-direction: column;
min-height: 100vh;
overflow: hidden;
background: linear-gradient(150deg, #f5fffe 0%, #ebf9ff 25%, #e1f5fe 50%, #e3f7f3 66%, #ebfbe8 85%, #f6fce6 100%);
`

const StatusBar = styled.div`
display: grid;
grid-template-columns: 1fr 376px 1fr;
align-items: center;
justify-items: center;
padding: 41px 32px 0 30px;
margin-bottom: 70px;
`

const Time = styled.span`
font-size: 50px;
font-weight: 600;
line-height: 60px;
color: #000;
`

const Island = styled.div`
width: 100%;
height: 111px;
border-radius: 56px;
background: #000;
`

const Content = styled.main`
padding: 0 60px;
`

const Header = styled.header`
display: flex;
justify-content: space-between;
align-items: flex-start;
height: 128px;
`

const Title = styled.h1`
margin: 0;
font-size: 74px;
font-weight: 900;
line-height: 78px;
`

const Tagline = styled.p`
margin: 8px 0 0;
font-size: 36px;
font-weight: 600;
line-height: 48px;
color: #5a6b89;
`

const HeaderActions = styled.div`
display: flex;
gap: 34px;
`

const RoundButton = styled.button`
display: flex;
align-items: center;
justify-content: center;
width: 128px;
height: 128px;
border: 3px solid #d9e5ee;
border-radius: 50%;
background: #fff;
color: ${NAVY};
`

const FilterRow = styled.div`
display: flex;
justify-content: space-between;
margin: 34px 0 41px;
`

const FilterButton = styled.button`
display: flex;
align-items: center;
gap: 28px;
height: 100px;
padding: 0 36px;
border: 3px solid ${(p) => p.$line};
border-radius: 50px;
background: #fdfefe;
color: ${(p) => p.$color};
font-size: 38px;
font-weight: 900;
`

const MapCard = styled.section`
position: relative;
width: 100%;
aspect-ratio: 1086 / 1079;
border-radius: 60px;
overflow: hidden;
box-shadow: 0 20px 70px rgba(20, 50, 60, 0.16), 0 0 0 2px #c7dae3;
`

const MapDrawing = styled.svg`
display: block;
width: 100%;
height: 100%;
`

const StreetName = styled.text`
font-size: 74px;
font-weight: 400;
fill: #363b55;
stroke: #faf9f6;
stroke-width: 12px;
stroke-linejoin: round;
paint-order: stroke;
`

const Pin = styled.button`
position: absolute;
left: ${(p) => (p.$x / 1086) * 100}%;
top: ${(p) => (p.$y / 1079) * 100}%;
display: flex;
align-items: center;
justify-content: center;
width: ${(p) => (p.$large ? 132 : 108)}px;
height: ${(p) => (p.$large ? 132 : 108)}px;
border-radius: 50%;
transform: translate(-50%, -50%);
background: ${(p) => (p.$kind === 'access' ? BLUE : GREEN)};
box-shadow: 0 16px 40px rgba(60, 50, 30, 0.22);
`

const PinLabel = styled.span`
position: absolute;
top: 126px;
left: 50%;
display: flex;
flex-direction: column;
align-items: center;
transform: translateX(-50%);
font-size: 33px;
font-weight: 600;
line-height: 34px;
white-space: nowrap;
color: #29292b;
text-shadow: 0 0 4px #f7f3ec, 3px 0 2px #f7f3ec, -3px 0 2px #f7f3ec, 0 3px 2px #f7f3ec, 0 -3px 2px #f7f3ec, 0 10px 20px rgba(0, 0, 0, 0.25);
`

const DistanceTag = styled.span`
position: absolute;
top: 138px;
left: 50%;
padding: 0 20px;
border-radius: 27px;
transform: translateX(-50%);
background: #fff;
color: ${NAVY};
font-size: 32px;
font-weight: 800;
line-height: 54px;
`

const Here = styled.div`
position: absolute;
left: ${(p) => (p.$x / 1086) * 100}%;
top: ${(p) => (p.$y / 1079) * 100}%;
width: 132px;
height: 132px;
border-radius: 50%;
transform: translate(-50%, -50%);
background: radial-gradient(circle, ${BLUE} 0 21px, #fff 21px 33px, rgba(51, 112, 251, 0.22) 33px);
`

const LocateButton = styled.button`
position: absolute;
top: 48px;
right: 49px;
display: flex;
align-items: center;
justify-content: center;
width: 132px;
height: 132px;
border-radius: 50%;
background: radial-gradient(ellipse 28px 44px at 102px 76px, #f8fcf2 50%, transparent 100%), #e1ffc4;
box-shadow: 0 14px 60px rgba(30, 50, 30, 0.22), inset 0 0 3px 2px #eeffdd;
`

const Attribution = styled.div`
position: absolute;
left: 28px;
bottom: 20px;
display: flex;
align-items: center;
color: rgba(25, 25, 25, 0.68);
`

const MapsWord = styled.span`
font-size: 45px;
font-weight: 400;
line-height: 56px;
`

const LegalLink = styled.a`
margin-left: 26px;
font-size: 27px;
font-weight: 500;
color: rgba(25, 25, 25, 0.58);
text-underline-offset: 4px;
`

const PlaceCard = styled.section`
margin-top: 41px;
padding: 42px 40px;
border: 2px solid #cbdbe2;
border-radius: 26px;
background: #fdfeff;
`

const PlaceTop = styled.div`
display: flex;
justify-content: space-between;
`

const PlaceText = styled.div`
padding-top: 24px;
`

const PlaceName = styled.h2`
margin: 0;
font-size: 48px;
font-weight: 900;
line-height: 60px;
`

const Distance = styled.p`
margin: 8px 0 4px;
font-size: 45px;
font-weight: 600;
line-height: 56px;
color: #ffdb29;
`

const Town = styled.p`
margin: 0;
font-size: 36px;
font-weight: 600;
line-height: 50px;
color: ${GREY};
`

const PlaceSide = styled.div`
display: flex;
flex-direction: column;
align-items: center;
gap: 28px;
`

const Minutes = styled.div`
padding: 0 36px;
border-radius: 55px;
background: #ffdb29;
color: #000;
font-size: 52px;
font-weight: 900;
line-height: 109px;
`

const PlainButton = styled.button`
display: flex;
color: #4e5870;
`

const Tags = styled.div`
display: flex;
align-items: center;
gap: 22px;
margin-top: 35px;
`

const Tag = styled.span`
display: flex;
align-items: center;
gap: 28px;
height: 84px;
padding: 0 30px;
border: 3px solid ${(p) => p.$line};
border-radius: 42px;
background: ${(p) => p.$fill};
color: ${(p) => p.$color};
font-size: ${(p) => p.$size}px;
font-weight: 900;
`

const Note = styled.div`
display: flex;
align-items: flex-end;
gap: 28px;
height: 56px;
margin-top: 24px;
padding-left: 3px;
`

const NoteText = styled.p`
flex: 1;
align-self: flex-start;
min-width: 0;
margin: 0;
overflow: hidden;
font-size: 30px;
font-weight: 500;
line-height: 48px;
white-space: nowrap;
color: #5a6b89;
`

const Actions = styled.div`
display: grid;
grid-template-columns: 1fr 1fr;
align-items: center;
gap: 30px;
margin-top: 33px;
`

const ActionButton = styled.button`
display: flex;
align-items: center;
justify-content: center;
gap: 30px;
height: ${(p) => p.$height}px;
border-radius: 32px;
background: ${BLUE};
color: #000;
font-size: 44px;
font-weight: 900;
`

const TabBar = styled.nav`
position: relative;
flex: 1;
display: grid;
grid-template-columns: repeat(5, 1fr);
align-items: start;
justify-items: center;
min-height: 320px;
padding: 0 30px;
border-radius: 80px 80px 0 0;
background: #fcfdfd;
box-shadow: 0 -16px 80px rgba(0, 0, 0, 0.16);
`

const Tab = styled.button`
display: flex;
align-items: center;
justify-content: center;
width: 100%;
height: 232px;
color: ${(p) => (p.$active ? BLUE : GREY)};
`

const SearchTab = styled.button`
display: flex;
align-items: center;
justify-content: center;
width: 174px;
height: 174px;
margin-top: 10px;
border-radius: 50%;
background: ${BLUE};
box-shadow: 0 16px 60px rgba(51, 112, 251, 0.4);
`
